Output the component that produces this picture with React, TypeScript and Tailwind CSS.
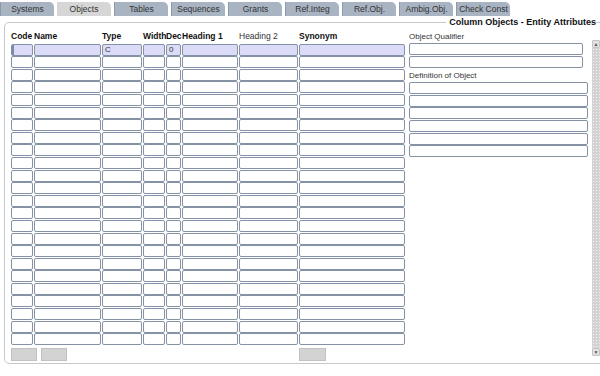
import React from "react"

const tabs = ["Systems", "Objects", "Tables", "Sequences", "Grants", "Ref.Integ", "Ref.Obj.", "Ambig.Obj.", "Check Const"]

const headers: { label: string; bold: boolean }[] = [
  { label: "Code", bold: true },
  { label: "Name", bold: true },
  { label: "Type", bold: true },
  { label: "Width", bold: true },
  { label: "Dec", bold: true },
  { label: "Heading 1", bold: true },
  { label: "Heading 2", bold: false },
  { label: "Synonym", bold: true },
]

const ROWS = 24

function Cell({ value, active, caret }: { value?: string; active?: boolean; caret?: boolean }) {
  return (
    <div
      className={
        "relative h-[12px] rounded-[2px] border border-[#8592a6] text-[8px] leading-[10px] pl-[2px] text-[#333] overflow-hidden " +
        (active ? "bg-[#dcdcf8]" : "bg-white")
      }
    >
      {caret && <div className="absolute left-0 top-0 h-full w-[2px] bg-[#7c88a8]" />}
      {value}
    </div>
  )
}

export default function App() {
  return (
    <div className="w-[600px] h-[376px] bg-white overflow-hidden font-['Liberation_Sans',Arial,sans-serif] text-[#222]">
      {/* Tabs */}
      <div className="flex gap-[3px] pt-[2px] h-[16px]">
        {tabs.map((t, i) => (
          <div
            key={t}
            className={
              "w-[54px] h-[14px] rounded-tr-[5px] flex items-center justify-center text-[8.5px] text-[#333] " +
              (i === 1 ? "bg-[#d6d6d6]" : "bg-[#a9b4c3] border-l border-[#8e9aab]")
            }
          >
            {t}
          </div>
        ))}
      </div>

      {/* Panel */}
      <div className="relative mt-[6px] ml-[4px] w-[600px] h-[342px] border border-[#c6c9cc] rounded-[5px] flex items-start">
        <div className="absolute right-[7px] top-[-6px] bg-white pl-[3px] text-[9px] leading-[10px] font-bold text-[#111]">
          Column Objects - Entity Attributes
        </div>

        {/* Column grid */}
        <div className="pl-[6px] pt-[9px]">
          <div className="grid grid-cols-[22px_67px_40px_22px_15px_56px_59px_106px] gap-x-px gap-y-[0.6px]">
            {headers.map((h) => (
              <div
                key={h.label}
                className={"h-[11px] text-[8.5px] leading-[9px] whitespace-nowrap " + (h.bold ? "font-bold text-[#111]" : "text-[#333]")}
              >
                {h.label}
              </div>
            ))}
            {Array.from({ length: ROWS }).map((_, r) =>
              headers.map((h, c) => (
                <Cell
                  key={r + "-" + c}
                  active={r === 0}
                  caret={r === 0 && c === 0}
                  value={r === 0 && c === 2 ? "C" : r === 0 && c === 4 ? "0" : undefined}
                />
              ))
            )}
          </div>
          <div className="flex mt-[3px]">
            <div className="w-[26px] h-[13px] bg-[#d3d3d3] border border-[#c2c2c2]" />
            <div className="w-[26px] h-[13px] ml-[4px] bg-[#d3d3d3] border border-[#c2c2c2]" />
            <div className="w-[27px] h-[13px] ml-[232px] bg-[#d3d3d3] border border-[#c2c2c2]" />
          </div>
        </div>

        {/* Right side fields */}
        <div className="ml-[4px] pt-[9px] w-[179px]">
          <div className="h-[11px] text-[8px] leading-[9px] text-[#333]">Object Qualifier</div>
          <div className="flex flex-col gap-px w-[174px]">
            <Cell />
            <Cell />
          </div>
          <div className="h-[14px] pt-[3px] text-[8px] leading-[9px] text-[#333]">Definition of Object</div>
          <div className="flex flex-col gap-y-[0.7px]">
            {Array.from({ length: 6 }).map((_, i) => (
              <Cell key={i} />
            ))}
          </div>
        </div>

        {/* Scrollbar */}
        <div className="ml-[4px] mt-[17px] w-[8px] h-[316px] flex flex-col">
          <div className="h-[8px] bg-[#e2e2e2] border border-[#c4c4c4] rounded-[1px] flex items-center justify-center text-[5px] leading-none text-[#555]">
            ▲
          </div>
          <div className="flex-1 bg-[#d3d3d3] bg-[radial-gradient(#f2f2f2_0.6px,transparent_0.7px)] bg-[length:3px_3px]" />
          <div className="h-[8px] bg-[#e2e2e2] border border-[#c4c4c4] rounded-[1px] flex items-center justify-center text-[5px] leading-none text-[#555]">
            ▼
          </div>
        </div>
      </div>
    </div>
  )
}
